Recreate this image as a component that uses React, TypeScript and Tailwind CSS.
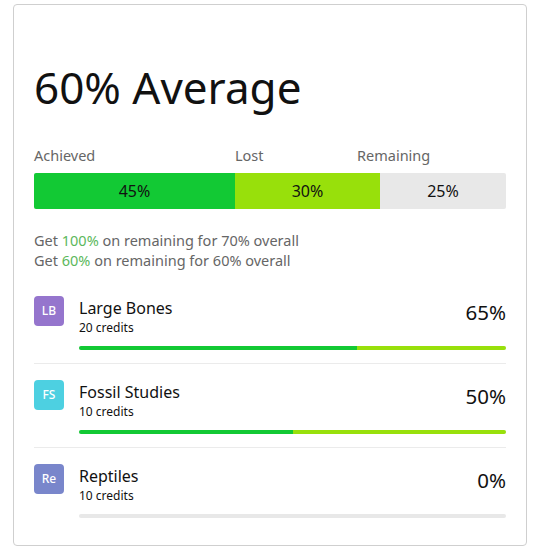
import React from "react";

const courses = [
  { code: "LB", name: "Large Bones", credits: 20, pct: 65, color: "bg-[#9575cd]" },
  { code: "FS", name: "Fossil Studies", credits: 10, pct: 50, color: "bg-[#4dd0e1]" },
  { code: "Re", name: "Reptiles", credits: 10, pct: 0, color: "bg-[#7986cb]" },
];

function CourseRow({ c, last }: { c: (typeof courses)[number]; last: boolean }) {
  return (
    <div className={`flex gap-[15px] pt-[16px] pb-[13px] ${last ? "" : "border-b border-[#ebebeb]"}`}>
      <div
        className={`w-[30px] h-[30px] shrink-0 rounded-[4px] ${c.color} text-white text-[12px] font-medium flex items-center justify-center`}
      >
        {c.code}
      </div>
      <div className="flex-1 flex flex-col">
        <div className="flex justify-between items-start">
          <div className="flex flex-col pt-[1px]">
            <span className="text-[16px] leading-[22px] text-[#111]">{c.name}</span>
            <span className="mt-[1px] text-[12px] leading-[16px] text-[#111]">{c.credits} credits</span>
          </div>
          <span className="mt-[2px] text-[20.5px] leading-[28px] text-[#111]">{c.pct}%</span>
        </div>
        <div className="mt-[10px] h-[4px] rounded-full bg-[#e8e8e8] flex overflow-hidden">
          {c.pct > 0 && (
            <>
              <div className="bg-[#12c934]" style={{ width: `${c.pct}%` }} />
              <div className="bg-[#98e00b] flex-1" />
            </>
          )}
        </div>
      </div>
    </div>
  );
}

export default function App() {
  return (
    <div
      className="w-[538px] h-[554px] bg-white pt-[4px] pl-[13px]"
      style={{ fontFamily: '"Noto Sans", "Open Sans", sans-serif' }}
    >
      <div className="w-[514px] h-[542px] border border-[#cfcfcf] rounded-[4px] px-[20px] pt-[52px]">
        <h1 className="text-[44px] leading-[60px] text-[#111]">60% Average</h1>

        <div className="mt-[28px] flex text-[14.5px] leading-[20px] text-[#666]">
          <span className="w-[201px]">Achieved</span>
          <span className="w-[122px]">Lost</span>
          <span>Remaining</span>
        </div>

        <div className="mt-[8px] h-[36px] flex rounded-[2px] overflow-hidden text-[16px] text-[#111]">
          <div className="w-[201px] bg-[#12c934] flex items-center justify-center">45%</div>
          <div className="w-[145px] bg-[#98e00b] flex items-center justify-center">30%</div>
          <div className="flex-1 bg-[#e8e8e8] flex items-center justify-center">25%</div>
        </div>

        <div className="mt-[21px] text-[14.5px] leading-[20px] text-[#666]">
          <p>
            Get <span className="text-[#5cb85c]">100%</span> on remaining for 70% overall
          </p>
          <p>
            Get <span className="text-[#5cb85c]">60%</span> on remaining for 60% overall
          </p>
        </div>

        <div className="mt-[10px]">
          {courses.map((c, i) => (
            <CourseRow key={c.code} c={c} last={i === courses.length - 1} />
          ))}
        </div>
      </div>
    </div>
  );
}
